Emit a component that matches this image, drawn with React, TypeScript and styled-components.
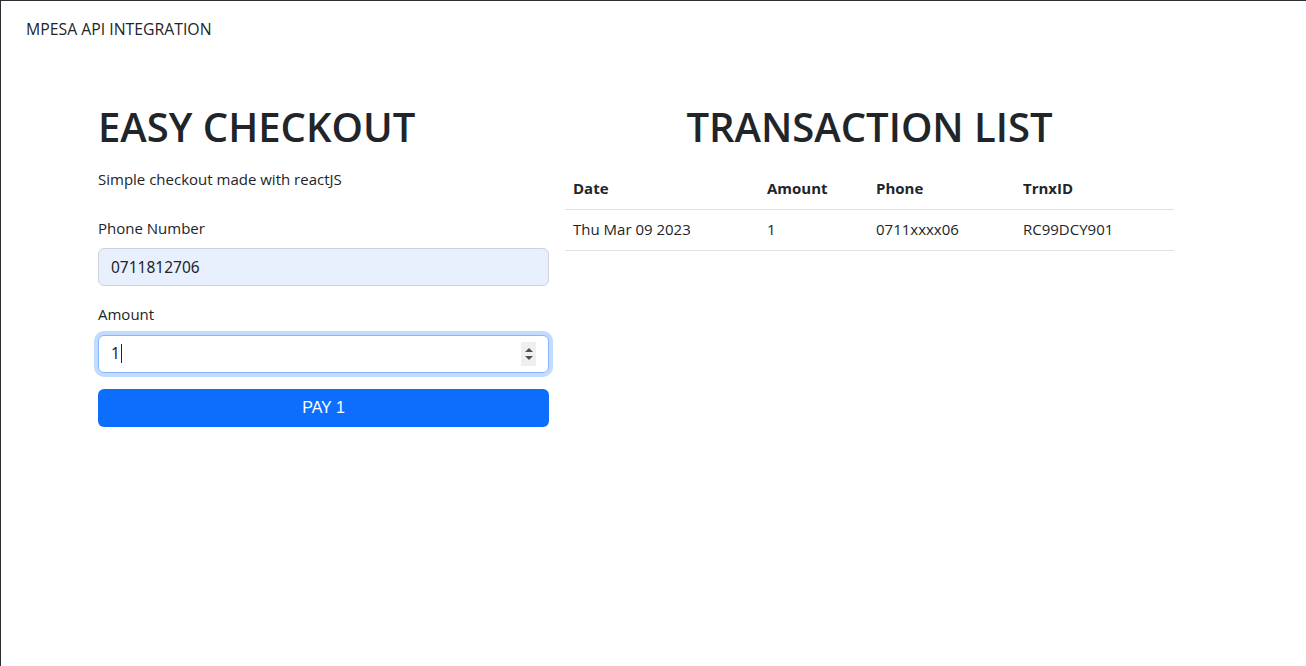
import React from "react";
import styled, { createGlobalStyle } from "styled-components";

const Global = createGlobalStyle`
  html, body { margin: 0; padding: 0; background: #fff; }
  body {
    font-family: "Open Sans", "Noto Sans", sans-serif;
    color: #212529;
    font-size: 16px;
    line-height: 1.5;
  }
  * { box-sizing: border-box; }
`;

const Page = styled.div`
  width: 1306px;
  height: 666px;
  border-top: 1px solid #2b2f33;
  border-left: 1px solid #2b2f33;
  overflow: hidden;
`;

const NavBar = styled.nav`
  height: 57px;
  display: flex;
  align-items: center;
  padding: 0 25px;
  font-size: 15.8px;
  color: #212529;
`;

const Main = styled.main`
  display: flex;
  gap: 16px;
  padding: 45px 0 0 97px;
`;

const LeftCol = styled.section`
  width: 451px;
  display: flex;
  flex-direction: column;
`;

const RightCol = styled.section`
  width: 609px;
  display: flex;
  flex-direction: column;
`;

const Heading = styled.h1<{ $center?: boolean }>`
  margin: 0 0 17px;
  font-size: 40px;
  font-weight: 600;
  line-height: 1.2;
  letter-spacing: 0;
  text-align: ${(p) => (p.$center ? "center" : "left")};
`;

const Lead = styled.p`
  margin: 0 0 26px;
  font-size: 15px;
`;

const Label = styled.label`
  display: block;
  margin-bottom: 9px;
  font-size: 15px;
`;

const FieldGroup = styled.div<{ $gap: number }>`
  margin-bottom: ${(p) => p.$gap}px;
`;

const TextInput = styled.input`
  display: block;
  width: 100%;
  height: 38px;
  padding: 6px 12px;
  font-family: "Noto Sans", sans-serif;
  font-size: 15.5px;
  color: #212529;
  background: #e8f0fe;
  border: 1px solid #ced4da;
  border-radius: 6px;
  outline: none;
`;

const FocusBox = styled.div`
  position: relative;
  display: flex;
  align-items: center;
  height: 38px;
  padding: 6px 12px;
  font-family: "Noto Sans", sans-serif;
  font-size: 15.5px;
  background: #fff;
  border: 1px solid #86b7fe;
  border-radius: 6px;
  box-shadow: 0 0 0 4px rgba(13, 110, 253, 0.25);
`;

const Caret = styled.span`
  display: inline-block;
  width: 1px;
  height: 19px;
  margin-left: 1px;
  background: #212529;
`;

const Spinner = styled.div`
  position: absolute;
  right: 12px;
  top: 50%;
  transform: translateY(-50%);
  width: 15px;
  height: 24px;
  background: #efefef;
  display: flex;
  flex-direction: column;
  align-items: center;
  justify-content: center;
  gap: 4px;
`;

const Arrow = styled.span<{ $down?: boolean }>`
  width: 0;
  height: 0;
  border-left: 4px solid transparent;
  border-right: 4px solid transparent;
  ${(p) =>
    p.$down
      ? "border-top: 4px solid #505050;"
      : "border-bottom: 4px solid #505050;"}
`;

const PayButton = styled.button`
  width: 100%;
  height: 38px;
  border: none;
  border-radius: 6px;
  background: #0d6efd;
  color: #fff;
  font-family: "Liberation Sans", Arial, sans-serif;
  font-size: 16px;
  cursor: pointer;
`;

const Table = styled.table`
  width: 100%;
  border-collapse: collapse;
  font-size: 15px;
`;

const Th = styled.th<{ $w: number }>`
  width: ${(p) => p.$w}px;
  text-align: left;
  font-weight: 700;
  padding: 8px;
  height: 41px;
  border-bottom: 1px solid #dee2e6;
`;

const Td = styled.td`
  padding: 8px;
  height: 41px;
  border-bottom: 1px solid #dee2e6;
`;

const rows = [
  { date: "Thu Mar 09 2023", amount: "1", phone: "0711xxxx06", id: "RC99DCY901" },
];

export default function App() {
  return (
    <Page>
      <Global />
      <NavBar>MPESA API INTEGRATION</NavBar>
      <Main>
        <LeftCol>
          <Heading>EASY CHECKOUT</Heading>
          <Lead>Simple checkout made with reactJS</Lead>
          <FieldGroup $gap={17}>
            <Label htmlFor="phone">Phone Number</Label>
            <TextInput id="phone" defaultValue="0711812706" readOnly />
          </FieldGroup>
          <FieldGroup $gap={16}>
            <Label>Amount</Label>
            <FocusBox role="textbox">
              1<Caret />
              <Spinner>
                <Arrow />
                <Arrow $down />
              </Spinner>
            </FocusBox>
          </FieldGroup>
          <PayButton>PAY 1</PayButton>
        </LeftCol>
        <RightCol>
          <Heading $center>TRANSACTION LIST</Heading>
          <Table>
            <thead>
              <tr>
                <Th $w={194}>Date</Th>
                <Th $w={109}>Amount</Th>
                <Th $w={147}>Phone</Th>
                <Th $w={159}>TrnxID</Th>
              </tr>
            </thead>
            <tbody>
              {rows.map((r) => (
                <tr key={r.id}>
                  <Td>{r.date}</Td>
                  <Td>{r.amount}</Td>
                  <Td>{r.phone}</Td>
                  <Td>{r.id}</Td>
                </tr>
              ))}
            </tbody>
          </Table>
        </RightCol>
      </Main>
    </Page>
  );
}
